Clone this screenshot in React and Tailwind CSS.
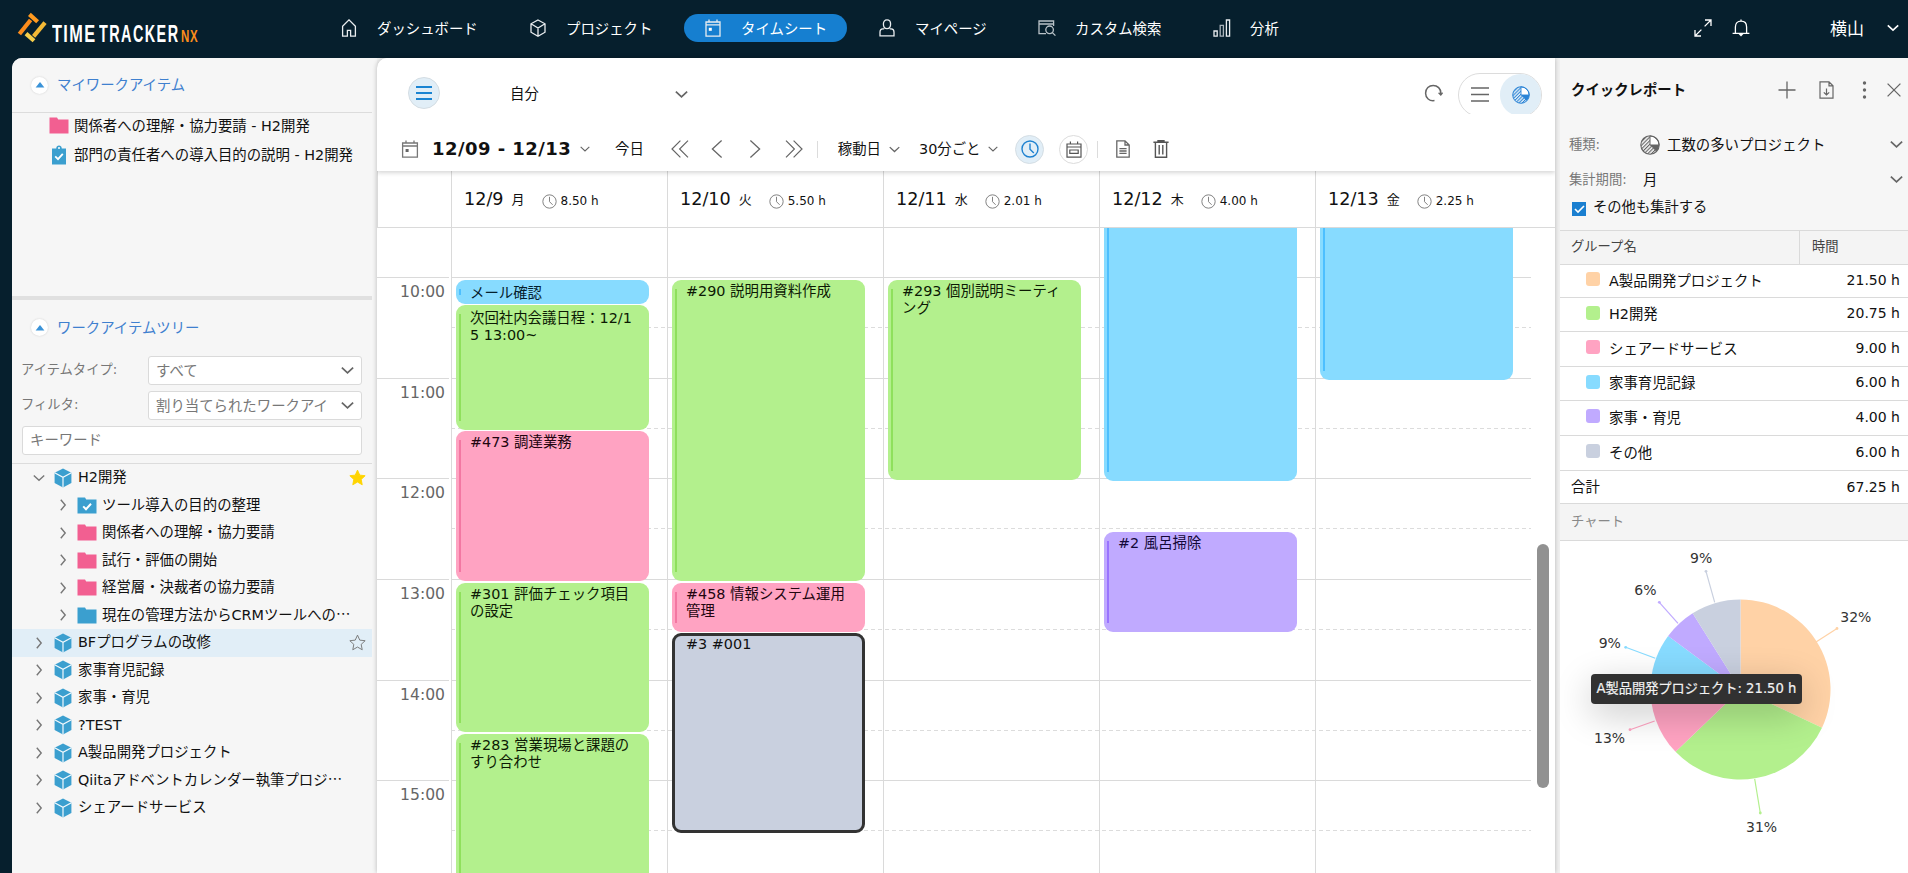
import React from 'react';
import clsx from 'clsx';

const navItems = [
    { label: 'ダッシュボード', icon: 'home', width: 'w-[178px]' },
    { label: 'プロジェクト', icon: 'cube', width: 'w-[164px]' },
    { label: 'タイムシート', icon: 'calendar', width: 'w-[163px]', active: true },
    { label: 'マイページ', icon: 'user', width: 'w-[149px]' },
    { label: 'カスタム検索', icon: 'search', width: 'w-[164px]' },
    { label: '分析', icon: 'bars', width: 'w-[106px]' },
];

const treeItems = [
    { label: 'H2開発', open: true, star: 'filled' },
    { label: 'ツール導入の目的の整理', child: true, color: '#3b9fcf', check: true },
    { label: '関係者への理解・協力要請', child: true, color: '#f25f91' },
    { label: '試行・評価の開始', child: true, color: '#f25f91' },
    { label: '経営層・決裁者の協力要請', child: true, color: '#f25f91' },
    { label: '現在の管理方法からCRMツールへの', child: true, color: '#3b9fcf', more: true },
    { label: 'BFプログラムの改修', star: 'outline', selected: true },
    { label: '家事育児記録' },
    { label: '家事・育児' },
    { label: '?TEST' },
    { label: 'A製品開発プロジェクト' },
    { label: 'Qiitaアドベントカレンダー執筆プロジ', more: true },
    { label: 'シェアードサービス' },
];

const eventColors = {
    green: 'bg-[#b3f08d] text-[#0c1a04]',
    pink: 'bg-[#ffa3c2] text-[#22050f]',
    blue: 'bg-[#87dbff] text-[#04202c]',
    purple: 'bg-[#c0aaff] text-[#130838]',
    gray: 'bg-[#c9d0df] text-[#111] border-[3px] border-[#333]',
};

const barColors = {
    green: 'bg-[#8fe05c]',
    pink: 'bg-[#f377a2]',
    blue: 'bg-[#4dbfff]',
    purple: 'bg-[#9a74ff]',
};

// top / height are px inside the scrolled time grid
const days = [
    {
        date: '12/9', day: '月', hours: '8.50 h',
        events: [
            { top: 52, height: 24, color: 'blue', lines: ['メール確認'], pad: 5 },
            { top: 77, height: 125, color: 'green', lines: ['次回社内会議日程：12/1', '5 13:00~'], pad: 5 },
            { top: 203, height: 150, color: 'pink', lines: ['#473 調達業務'] },
            { top: 355, height: 149, color: 'green', lines: ['#301 評価チェック項目', 'の設定'] },
            { top: 506, height: 160, color: 'green', lines: ['#283 営業現場と課題の', 'すり合わせ'] },
        ],
    },
    {
        date: '12/10', day: '火', hours: '5.50 h',
        events: [
            { top: 52, height: 301, color: 'green', lines: ['#290 説明用資料作成'] },
            { top: 355, height: 49, color: 'pink', lines: ['#458 情報システム運用', '管理'] },
            { top: 405, height: 200, color: 'gray', lines: ['#3 #001'] },
        ],
    },
    {
        date: '12/11', day: '水', hours: '2.01 h',
        events: [{ top: 52, height: 200, color: 'green', lines: ['#293 個別説明ミーティ', 'ング'] }],
    },
    {
        date: '12/12', day: '木', hours: '4.00 h',
        events: [
            { top: -40, height: 293, color: 'blue', lines: [] },
            { top: 304, height: 100, color: 'purple', lines: ['#2 風呂掃除'] },
        ],
    },
    {
        date: '12/13', day: '金', hours: '2.25 h',
        events: [{ top: -40, height: 192, color: 'blue', lines: [] }],
    },
];

const hourRows = [
    { label: '', className: 'h-[50px]' },
    { label: '10:00', className: 'h-[101px]' },
    { label: '11:00', className: 'h-[100px]' },
    { label: '12:00', className: 'h-[101px]' },
    { label: '13:00', className: 'h-[101px]' },
    { label: '14:00', className: 'h-[100px]' },
    { label: '15:00', className: 'h-[101px]' },
];

const groups = [
    { name: 'A製品開発プロジェクト', value: 21.5, color: '#ffd2a6', row: 'h-[33px]' },
    { name: 'H2開発', value: 20.75, color: '#b3f08d', row: 'h-[34px]' },
    { name: 'シェアードサービス', value: 9, color: '#ffa3c2', row: 'h-[35px]' },
    { name: '家事育児記録', value: 6, color: '#87dbff', row: 'h-[34px]' },
    { name: '家事・育児', value: 4, color: '#c0aaff', row: 'h-[35px]' },
    { name: 'その他', value: 6, color: '#c9d0df', row: 'h-[35px]' },
];

const chartLabels = [
    { text: '32%', x: 280.3, y: 80.5, line: [256, 101, 277, 87.5] },
    { text: '31%', x: 186, y: 290.5, line: [194.7, 238, 200.3, 272] },
    { text: '13%', x: 34, y: 201.5, line: [94.7, 180, 70, 188.7] },
    { text: '9%', x: 38.7, y: 106.5, line: [95.3, 117.3, 65.7, 106.3] },
    { text: '6%', x: 74.3, y: 53.5, line: [118, 82.3, 99.3, 61.3] },
    { text: '9%', x: 130, y: 21.5, line: [154.7, 61.3, 146, 30.3] },
];

const Chevron = ({ dir = 'down', className = 'w-3 h-3', stroke = '#666', width = 1.6 }) => {
    const paths = {
        down: 'M0.8 3.4L6 8.2L11.2 3.4',
        right: 'M3.8 0.8L8.2 6L3.8 11.2',
    };
    return (
        <svg className={clsx('shrink-0', className)} viewBox="0 0 12 12" fill="none" stroke={stroke} strokeWidth={width}>
            <path d={paths[dir]} />
        </svg>
    );
};

const NavIcon = ({ name }) => (
    <svg className="w-[18px] h-[18px] shrink-0" viewBox="0 0 18 18" fill="none" stroke="#e9edf0" strokeWidth="1.3">
        {name === 'home' && <path d="M2.6 17.2V7.2L9 0.9L15.4 7.2V17.2H10.6V11.4H7.4V17.2Z" />}
        {name === 'cube' && <path d="M9 1L16 4.8V13.2L9 17.2L2 13.2V4.8ZM2 4.8L9 9L16 4.8M9 9V17" />}
        {name === 'calendar' && (
            <>
                <path d="M2 3H16V17.2H2ZM2 5.8H16M5 0.4V3.4M13 0.4V3.4" />
                <rect x="4.8" y="8.8" width="3" height="3" fill="#fff" stroke="none" />
            </>
        )}
        {name === 'user' && (
            <path d="M9 0.9C11.4 0.9 12.6 2.8 12.6 5C12.6 7.6 11.2 9.6 9 9.6C6.8 9.6 5.4 7.6 5.4 5C5.4 2.8 6.6 0.9 9 0.9ZM6.2 9.8H4.8C3 9.8 2 11.2 2 13V16.9H16V13C16 11.2 15 9.8 13.2 9.8H11.8" />
        )}
        {name === 'search' && (
            <g stroke="#b9c2c8">
                <path d="M8 14.6H1V2H15.6V7M1 5H15.6" />
                <circle cx="11.6" cy="10.8" r="3.8" />
                <path d="M14.4 13.6L17.4 16.6" />
            </g>
        )}
        {name === 'bars' && (
            <>
                <path d="M1 12H4.2V17.2H1ZM13.4 1H16.6V17.2H13.4Z" />
                <path d="M7.2 6.4H10.4V17.2H7.2Z" stroke="#a9b3ba" />
            </>
        )}
    </svg>
);

const CalendarIcon = () => (
    <svg className="w-[18px] h-[18px] shrink-0" viewBox="0 0 18 18" fill="none" stroke="#777" strokeWidth="1.3">
        <path d="M1.6 3H16.4V17.2H1.6ZM1.6 6H16.4M5 0.4V3.4M13 0.4V3.4" />
        <rect x="4.6" y="9" width="3" height="3" fill="#666" stroke="none" />
    </svg>
);

const ClockIcon = ({ className, stroke = '#777', width = 1.1 }) => (
    <svg className={clsx('shrink-0', className)} viewBox="0 0 18 18" fill="none" stroke={stroke} strokeWidth={width}>
        <circle cx="9" cy="9" r="8" />
        <path d="M9 3.4V9.2L12.8 13" />
    </svg>
);

const ReportPie = ({ className, color, id }) => (
    <svg className={clsx('shrink-0', className)} viewBox="0 0 20 20">
        <defs>
            <pattern id={id} width="2.6" height="2.6" patternUnits="userSpaceOnUse" patternTransform="rotate(45)">
                <rect width="1.1" height="2.6" fill={color} />
            </pattern>
        </defs>
        <circle cx="10" cy="10" r="9.2" fill={`url(#${id})`} />
        <path d="M10 10V1A9 9 0 0 1 19 10Z" fill="#fff" stroke={color} strokeWidth="1" />
        <path d="M10 10H19A9 9 0 0 1 16.2 16.5Z" fill={color} />
        <circle cx="10" cy="10" r="9.2" fill="none" stroke={color} strokeWidth="1.1" />
    </svg>
);

const Cube = () => (
    <svg className="w-[18px] h-[20px] shrink-0" viewBox="0 0 18 20">
        <path d="M9 0.4L17.4 4.8V15L9 19.6L0.6 15V4.8Z" fill="#3b9fcf" />
        <path d="M0.6 4.8L9 9.4L17.4 4.8M9 9.4V19.6" stroke="#f2f9fd" strokeWidth="1.2" fill="none" />
    </svg>
);

const Folder = ({ color, check }) => (
    <svg className="w-[20px] h-[17px] shrink-0" viewBox="0 0 20 17">
        <path d="M0.5 0.5H8L9.2 2.4H19.5V16.5H0.5Z" fill={color} />
        {check && <path d="M6.2 9.4L9 12.2L14 6.8" stroke="#fff" strokeWidth="2" fill="none" />}
    </svg>
);

const Star = ({ filled }) => (
    <svg className="w-[17px] h-[17px] shrink-0" viewBox="0 0 18 18">
        <path
            d="M9 1.2L11.4 6.5L17.1 7.1L12.9 11L14 16.7L9 13.8L4 16.7L5.1 11L0.9 7.1L6.6 6.5Z"
            fill={filled ? '#ffd400' : 'none'}
            stroke={filled ? '#ffd400' : '#777'}
            strokeWidth="1"
        />
    </svg>
);

const Logo = () => (
    <div className="flex h-[34px] items-start">
        <svg className="h-[32px] w-[32px] shrink-0" viewBox="0 0 32 32" fill="none" strokeWidth="4.2">
            <path d="M13.4 2.4L21.6 9.8" stroke="#ff9a1f" />
            <path d="M14.6 8L3.4 22" stroke="#fb8c1c" />
            <path d="M29 10.6L17.6 24.4" stroke="#f4b935" />
            <path d="M10 21.6L18 28.8" stroke="#f7cf4b" />
        </svg>
        <div className="ml-[4px] flex h-[34px] items-start font-['Liberation_Sans',sans-serif] font-bold">
            <span className="mt-[10px] w-[47px] text-[24px] leading-[24px]">
                <span className="inline-block origin-left scale-x-[0.68] tracking-[2px]">TIME</span>
            </span>
            <span className="mt-[10px] w-[82px] text-[24px] leading-[24px]">
                <span className="inline-block origin-left scale-x-[0.6] tracking-[2.4px]">TRACKER</span>
            </span>
            <span className="mt-[16px] w-[20px] text-[16px] leading-[18px] text-[#fb8c1c]">
                <span className="inline-block origin-left scale-x-[0.72] tracking-[1px]">NX</span>
            </span>
        </div>
    </div>
);

const Header = () => (
    <header className="flex h-[58px] shrink-0 items-start text-white">
        <div className="w-[320px] shrink-0 pl-4 pt-3">
            <Logo />
        </div>
        <nav className="flex gap-[11px] pt-[14px]">
            {navItems.map((item) => (
                <div
                    key={item.label}
                    className={clsx('flex h-7 items-center rounded-full pl-[20px]', item.width, item.active && 'bg-[#167fd0]')}
                >
                    <NavIcon name={item.icon} />
                    <span className="ml-[19px] mt-px whitespace-nowrap">{item.label}</span>
                </div>
            ))}
        </nav>
        <div className="ml-auto flex h-7 items-center pr-[9px] mt-[14px]">
            <svg className="w-[18px] h-[18px]" viewBox="0 0 18 18" fill="none" stroke="#fff" strokeWidth="1.3">
                <path d="M11 1H17V7M17 1L10.6 7.4M7 17H1V11M1 17L7.4 10.6" />
            </svg>
            <svg className="ml-5 w-[18px] h-[18px]" viewBox="0 0 18 18" fill="none" stroke="#fff" strokeWidth="1.3">
                <path d="M0.6 14.4H17.4M3.4 14.4V8C3.4 4.4 5.6 2.2 9 2.2C12.4 2.2 14.6 4.4 14.6 8V14.4M9 0.4V2.2" />
                <path d="M6.6 15H11.4L9 17.6Z" fill="#fff" stroke="none" />
            </svg>
            <span className="ml-[80px] mt-px text-[17px]">横山</span>
            <Chevron className="ml-[23px] w-3 h-3" stroke="#fff" />
        </div>
    </header>
);

const SectionTitle = ({ children }) => (
    <div className="flex items-center pl-[19px]">
        <span className="flex h-[17px] w-[17px] items-center justify-center rounded-full bg-white shadow-[0_0_2px_#ccc]">
            <svg className="h-2 w-2.5" viewBox="0 0 10 8"><path d="M5 1L9.4 6.4H0.6Z" fill="#3b93d8" /></svg>
        </span>
        <span className="ml-[9px] text-[#3f80cf]">{children}</span>
    </div>
);

const SelectBox = ({ children }) => (
    <div className="flex h-[29px] w-[214px] items-center justify-between rounded-[3px] border border-[#dadada] bg-white pl-[7px] pr-[7px] text-[#777]">
        <span className="whitespace-nowrap">{children}</span>
        <Chevron className="w-[13px] h-[13px]" />
    </div>
);

const Sidebar = () => (
    <aside className="flex w-[365px] shrink-0 flex-col rounded-tl-[10px] bg-[#f6f6f6]">
        <div className="flex h-[55px] w-[360px] items-center border-b border-[#dcdcdc]">
            <SectionTitle>マイワークアイテム</SectionTitle>
        </div>
        <div className="flex h-[183px] flex-col pl-[37px]">
            <div className="flex h-[25px] items-center">
                <Folder color="#f25f91" />
                <span className="ml-[5px]">関係者への理解・協力要請 - H2開発</span>
            </div>
            <div className="flex h-[33px] items-center">
                <svg className="ml-0.5 mt-px w-4 h-5 shrink-0" viewBox="0 0 16 20">
                    <path d="M1 3.4H5.2C5.4 1.6 6.4 0.6 8 0.6C9.6 0.6 10.6 1.6 10.8 3.4H15V19.4H1Z" fill="#3b9fcf" />
                    <circle cx="8" cy="3" r="1" fill="#fff" />
                    <path d="M4.2 11.4L7 14.2L11.8 8.8" stroke="#fff" strokeWidth="1.8" fill="none" />
                </svg>
                <span className="ml-[7px]">部門の責任者への導入目的の説明 - H2開発</span>
            </div>
        </div>
        <div className="h-1 w-[360px] bg-[#e0e0e0]" />
        <div className="flex h-[56px] items-center pb-px">
            <SectionTitle>ワークアイテムツリー</SectionTitle>
        </div>
        <div className="flex w-[360px] flex-col gap-[6px] border-b border-[#dcdcdc] pb-2 pl-[10px] pr-[10px]">
            <div className="flex items-center justify-between">
                <span className="-ml-px mb-0.5 text-[13.3px] text-[#777]">アイテムタイプ:</span>
                <SelectBox>すべて</SelectBox>
            </div>
            <div className="flex items-center justify-between">
                <span className="-ml-px mb-0.5 text-[13.3px] text-[#777]">フィルタ:</span>
                <SelectBox>割り当てられたワークアイ</SelectBox>
            </div>
            <div className="flex h-[29px] items-center rounded-[3px] border border-[#dadada] bg-white pb-0.5 pl-[7px] text-[#777]">
                キーワード
            </div>
        </div>
        <div className="flex w-[360px] flex-col">
            {treeItems.map((item) => (
                <div
                    key={item.label}
                    className={clsx(
                        'flex h-[27.5px] items-center pr-[6px]',
                        item.child ? 'pl-[45px]' : 'pl-[21px]',
                        item.selected && 'bg-[#e1eef7]'
                    )}
                >
                    <Chevron dir={item.open ? 'down' : 'right'} className="w-[12px] h-[12px]" stroke="#777" width={1.4} />
                    {item.child ? (
                        <span className="ml-2 mr-[5px] flex"><Folder color={item.color} check={item.check} /></span>
                    ) : (
                        <span className="ml-[9px] mr-[6px] flex"><Cube /></span>
                    )}
                    <span className="mb-px whitespace-nowrap">
                        {item.label}
                        {item.more && <span className="font-['Noto_Sans_CJK_JP']">…</span>}
                    </span>
                    {item.star && <span className="ml-auto"><Star filled={item.star === 'filled'} /></span>}
                </div>
            ))}
        </div>
    </aside>
);

const Toolbar = () => (
    <div className="z-10 flex h-[113px] shrink-0 flex-col rounded-tl-[10px] bg-white shadow-[0_2px_4px_rgba(0,0,0,0.16)]">
        <div className="flex h-[72px] items-center pb-0.5 pl-[31px] pr-[13px]">
            <span className="flex h-8 w-8 items-center justify-center rounded-full border border-[#d4dde3] bg-[#e1eef7]">
                <svg className="h-4 w-4" viewBox="0 0 16 16" stroke="#1a84d2" strokeWidth="2"><path d="M0 2H16M0 8H16M0 14H16" /></svg>
            </span>
            <span className="ml-[70px] mt-px">自分</span>
            <Chevron className="ml-[136px] mt-0.5 w-[13px] h-[13px]" />
            <svg className="ml-auto h-[18px] w-[19px]" viewBox="0 0 19 18" fill="none" stroke="#666" strokeWidth="1.5">
                <path d="M10.5 16.6C5.4 17.4 1.6 14 1.6 9.2C1.6 4.6 5 1.4 9.2 1.4C13.6 1.4 16.8 4.8 16.8 8.8V10.4" />
                <path d="M14.6 8.8L16.8 10.8L18.6 8.6" />
            </svg>
            <div className="ml-[15px] h-[41px] overflow-hidden">
                <div className="flex h-[44px] w-[84px] rounded-full border border-[#dcdcdc]">
                    <span className="flex h-[40px] w-[41px] items-center justify-center pr-[3px] pl-[3px]">
                        <svg className="h-4 w-[18px] shrink-0" viewBox="0 0 18 16" stroke="#666" strokeWidth="1.5"><path d="M0 2H18M0 8.5H18M0 15H18" /></svg>
                    </span>
                    <span className="flex h-[42px] w-[41px] items-center justify-center rounded-full bg-[#e1eef7]">
                        <ReportPie id="hatch-blue" className="h-[18px] w-[18px]" color="#2b84d6" />
                    </span>
                </div>
            </div>
        </div>
        <div className="flex h-[38px] items-center pl-[24px]">
            <CalendarIcon />
            <span className="mb-px ml-[13px] w-[143px] whitespace-nowrap text-[18px] font-bold tracking-[0.45px]">12/09 - 12/13</span>
            <Chevron className="ml-[5px] w-[10px] h-[10px]" width={1.4} />
            <span className="ml-[25px]">今日</span>
            <svg className="ml-[27px] h-[18px] w-[18px]" viewBox="0 0 18 18" fill="none" stroke="#666" strokeWidth="1.2"><path d="M9.4 0.6L1 9L9.4 17.4M17 0.6L8.6 9L17 17.4" /></svg>
            <svg className="ml-[22px] h-[18px] w-[12px]" viewBox="0 0 12 18" fill="none" stroke="#666" strokeWidth="1.3"><path d="M10.6 0.6L1.4 9L10.6 17.4" /></svg>
            <svg className="ml-[26px] h-[18px] w-[12px]" viewBox="0 0 12 18" fill="none" stroke="#666" strokeWidth="1.3"><path d="M1.4 0.6L10.6 9L1.4 17.4" /></svg>
            <svg className="ml-[24px] h-[18px] w-[18px]" viewBox="0 0 18 18" fill="none" stroke="#666" strokeWidth="1.2"><path d="M1 0.6L9.4 9L1 17.4M8.6 0.6L17 9L8.6 17.4" /></svg>
            <span className="ml-[14px] h-[17px] w-px bg-[#dcdcdc]" />
            <span className="ml-[20px]">稼動日</span>
            <Chevron className="ml-[8px] w-[11px] h-[11px]" width={1.4} />
            <span className="ml-[19px] mb-px">30分ごと</span>
            <Chevron className="ml-[8px] w-[10px] h-[10px]" width={1.4} />
            <span className="ml-[17px] flex h-[29px] w-[29px] items-center justify-center rounded-full border border-[#d4dde3] bg-[#e1eef7]">
                <ClockIcon className="h-[18px] w-[18px]" stroke="#1f82d0" width={1.4} />
            </span>
            <span className="ml-[15px] flex h-[29px] w-[29px] items-center justify-center rounded-full border border-[#dcdcdc]">
                <svg className="h-[17px] w-[16px]" viewBox="0 0 16 17" fill="none" stroke="#555" strokeWidth="1.2">
                    <path d="M1 3H15V16.2H1ZM1 6H15M4.4 0.4V3.4M11.6 0.4V3.4M3.8 9H12.2V12.4H3.8Z" />
                </svg>
            </span>
            <span className="ml-[9px] h-[17px] w-px bg-[#dcdcdc]" />
            <svg className="ml-[18px] h-[18px] w-[14px]" viewBox="0 0 14 18" fill="none" stroke="#666" strokeWidth="1.3">
                <path d="M0.8 0.8H9L13.2 5V17.2H0.8ZM9 0.8V5H13.2" />
                <path d="M3.4 8.6H10.6M3.4 11H10.6M3.4 13.4H10.6" />
            </svg>
            <svg className="ml-[23px] h-[18px] w-[16px]" viewBox="0 0 16 18" fill="none" stroke="#555" strokeWidth="1.4">
                <path d="M0.4 2.2H15.6M5 2V0.8H11V2M2.4 2.4V17.2H13.6V2.4M6.2 5V14.6M9.8 5V14.6" />
            </svg>
        </div>
    </div>
);

const EventBlock = ({ event }) => (
    <div
        className={clsx('absolute left-1 w-[193px] overflow-hidden rounded-[9px]', eventColors[event.color])}
        style={{ top: event.top, height: event.height }}
    >
        {barColors[event.color] && (
            <span className={clsx('absolute bottom-[9px] left-[3px] top-[9px] w-[2px]', barColors[event.color])} />
        )}
        <div
            className={clsx('whitespace-nowrap leading-[17px]', event.color === 'gray' ? 'pl-[11px]' : 'pl-[14px]')}
            style={{ paddingTop: event.color === 'gray' ? 0 : event.pad || 3 }}
        >
            {event.lines.map((line) => <div key={line}>{line}</div>)}
        </div>
    </div>
);

const Calendar = () => (
    <main className="flex w-[1178px] shrink-0 flex-col overflow-hidden rounded-tl-[10px] bg-white shadow-[0_0_5px_rgba(0,0,0,0.25)]">
        <Toolbar />
        <div className="flex h-[57px] shrink-0 border-b border-l border-[#dadada]">
            <div className="w-[73px] shrink-0" />
            {days.map((d) => (
                <div key={d.date} className="flex w-[216px] shrink-0 items-center border-l border-[#dadada] pl-[12px]">
                    <span className="text-[17.6px]">{d.date}</span>
                    <span className="ml-[8px] mt-px text-[13px]">{d.day}</span>
                    <ClockIcon className="ml-[17px] mt-1 h-[15px] w-[15px]" />
                    <span className="ml-[4px] mt-1 text-[12px]">{d.hours}</span>
                </div>
            ))}
        </div>
        <div className="flex min-h-0 flex-1 justify-between overflow-hidden">
            <div className="relative flex h-[645px] w-[1154px] overflow-hidden">
                <div className="absolute inset-0 flex flex-col">
                    {hourRows.map((row) => (
                        <div key={row.label} className={clsx('flex shrink-0', row.className)}>
                            <div className={clsx('w-[72px] pr-[4px] pt-[4px] text-right text-[15.6px] text-[#666]', row.label !== '15:00' && 'border-b border-[#dadada]')}>
                                {row.label}
                            </div>
                            <div className="w-[2px]" />
                            <div className={clsx('flex flex-1 flex-col pt-[49px]', row.label !== '15:00' && 'border-b border-[#dadada]')}>
                                {row.label && (
                                    <div className="h-px shrink-0 bg-[repeating-linear-gradient(90deg,#dcdcdc_0_4px,transparent_4px_7px)]" />
                                )}
                            </div>
                        </div>
                    ))}
                </div>
                <div className="w-[74px] shrink-0" />
                {days.map((d) => (
                    <div key={d.date} className="relative w-[216px] shrink-0 border-l border-[#dadada]">
                        {d.events.map((e) => <EventBlock key={e.top} event={e} />)}
                    </div>
                ))}
            </div>
            <div className="mr-[6px] mt-[316px] h-[244px] w-3 rounded-full bg-[#919191]" />
        </div>
    </main>
);

const total = groups.reduce((sum, g) => sum + g.value, 0);

const PieChart = () => {
    const cx = 180.5;
    const cy = 148.5;
    const r = 90;
    let angle = 0;
    const point = (a) => `${cx + r * Math.sin(a)} ${cy - r * Math.cos(a)}`;

    return (
        <svg className="h-[332px] w-[348px]" viewBox="0 0 348 332" fontSize="14" fill="#333">
            {groups.map((g) => {
                const start = angle;
                angle += (g.value / total) * Math.PI * 2;
                return (
                    <path
                        key={g.name}
                        d={`M${cx} ${cy}L${point(start)}A${r} ${r} 0 0 1 ${point(angle)}Z`}
                        fill={g.color}
                    />
                );
            })}
            {chartLabels.map((l, i) => (
                <g key={l.x}>
                    <line x1={l.line[0]} y1={l.line[1]} x2={l.line[2]} y2={l.line[3]} stroke={groups[i].color} strokeWidth="1.2" />
                    <circle cx={l.line[2]} cy={l.line[3]} r="1.4" fill={groups[i].color} />
                    <text x={l.x} y={l.y}>{l.text}</text>
                </g>
            ))}
        </svg>
    );
};

const QuickReport = () => (
    <section className="ml-[5px] flex w-[348px] shrink-0 flex-col bg-[#f6f6f6]">
        <div className="flex h-[64px] items-center pl-[11px] pr-[7px]">
            <span className="font-bold">クイックレポート</span>
            <svg className="ml-auto h-[18px] w-[18px]" viewBox="0 0 18 18" stroke="#666" strokeWidth="1.3"><path d="M9 0.5V17.5M0.5 9H17.5" /></svg>
            <svg className="ml-[23px] h-[18px] w-[15px]" viewBox="0 0 15 18" fill="none" stroke="#666" strokeWidth="1.2">
                <path d="M1 0.8H10L14 4.8V17.2H1ZM10 0.8V4.8H14M7.5 7.4V14M4.8 11.4L7.5 14L10.2 11.4" />
            </svg>
            <svg className="ml-[28px] h-[18px] w-[5px]" viewBox="0 0 5 18" fill="#666"><circle cx="2.5" cy="2" r="1.7" /><circle cx="2.5" cy="9" r="1.7" /><circle cx="2.5" cy="16" r="1.7" /></svg>
            <svg className="ml-[20px] h-[14px] w-[14px]" viewBox="0 0 14 14" stroke="#666" strokeWidth="1.3"><path d="M0.6 0.6L13.4 13.4M13.4 0.6L0.6 13.4" /></svg>
        </div>
        <div className="flex h-[45px] items-center pl-[9px] pr-[5px]">
            <span className="w-[71px] text-[13.3px] text-[#777]">種類:</span>
            <ReportPie id="hatch-gray" className="h-5 w-5" color="#666" />
            <span className="ml-[7px]">工数の多いプロジェクト</span>
            <Chevron className="ml-auto w-[13px] h-[13px]" />
        </div>
        <div className="flex h-[25px] items-center pl-[9px] pr-[5px]">
            <span className="w-[74px] text-[13.3px] text-[#777]">集計期間:</span>
            <span>月</span>
            <Chevron className="ml-auto w-[13px] h-[13px]" />
        </div>
        <div className="flex h-[38px] items-start pl-3 pt-[5px]">
            <span className="mt-[5px] flex h-[14px] w-[14px] items-center justify-center bg-[#1a7fd0]">
                <svg className="h-[10px] w-[11px]" viewBox="0 0 11 10" fill="none" stroke="#fff" strokeWidth="1.6"><path d="M1 5L4 8L10 2" /></svg>
            </span>
            <span className="ml-[7px] text-[14.3px]">その他も集計する</span>
        </div>
        <div className="flex h-[35px] items-stretch border-y border-[#dadada] bg-[#f4f4f4] pb-0 text-[13.3px] text-[#444]">
            <span className="flex w-[240px] items-center border-r border-[#dadada] pb-0.5 pl-[11px]">グループ名</span>
            <span className="flex items-center pb-0.5 pl-3">時間</span>
        </div>
        {groups.map((g) => (
            <div key={g.name} className={clsx('flex items-center border-b border-[#dadada] bg-white pb-[3px] pl-[26px] pr-2', g.row)}>
                <span className="mb-px h-[14px] w-[14px] rounded-[3px]" style={{ backgroundColor: g.color }} />
                <span className="ml-[9px] mt-[2px]">{g.name}</span>
                <span className="ml-auto text-[14px]">{g.value.toFixed(2)} h</span>
            </div>
        ))}
        <div className="flex h-[33px] items-center justify-between border-b border-[#dadada] bg-white pl-[11px] pr-2">
            <span>合計</span>
            <span className="text-[14px]">{total.toFixed(2)} h</span>
        </div>
        <div className="flex h-[37px] items-center border-b border-[#dadada] bg-[#f4f4f4] pl-[11px] text-[13.3px] text-[#888]">チャート</div>
        <div className="relative min-h-0 flex-1 bg-white">
            <PieChart />
            <div className="absolute left-[31px] top-[133px] flex h-[30px] w-[211px] items-center justify-center whitespace-nowrap rounded-[4px] bg-[#313131] text-[13.2px] text-[#f2f2f2] shadow-[0_10px_36px_rgba(0,0,0,0.22)] [-webkit-text-stroke:0.2px_#f2f2f2]">
                A製品開発プロジェクト: 21.50 h
            </div>
        </div>
    </section>
);

export default function App() {
    return (
        <div className="flex h-[873px] w-[1908px] flex-col overflow-hidden bg-[#061f2d] font-['DejaVu_Sans','Noto_Sans_CJK_JP',sans-serif] text-[14.4px] leading-[20px] text-[#111]">
            <Header />
            <div className="flex min-h-0 flex-1 pl-3">
                <div className="flex flex-1 rounded-tl-[10px] bg-[#f1f1f1]">
                    <Sidebar />
                    <Calendar />
                    <QuickReport />
                </div>
            </div>
        </div>
    );
}
